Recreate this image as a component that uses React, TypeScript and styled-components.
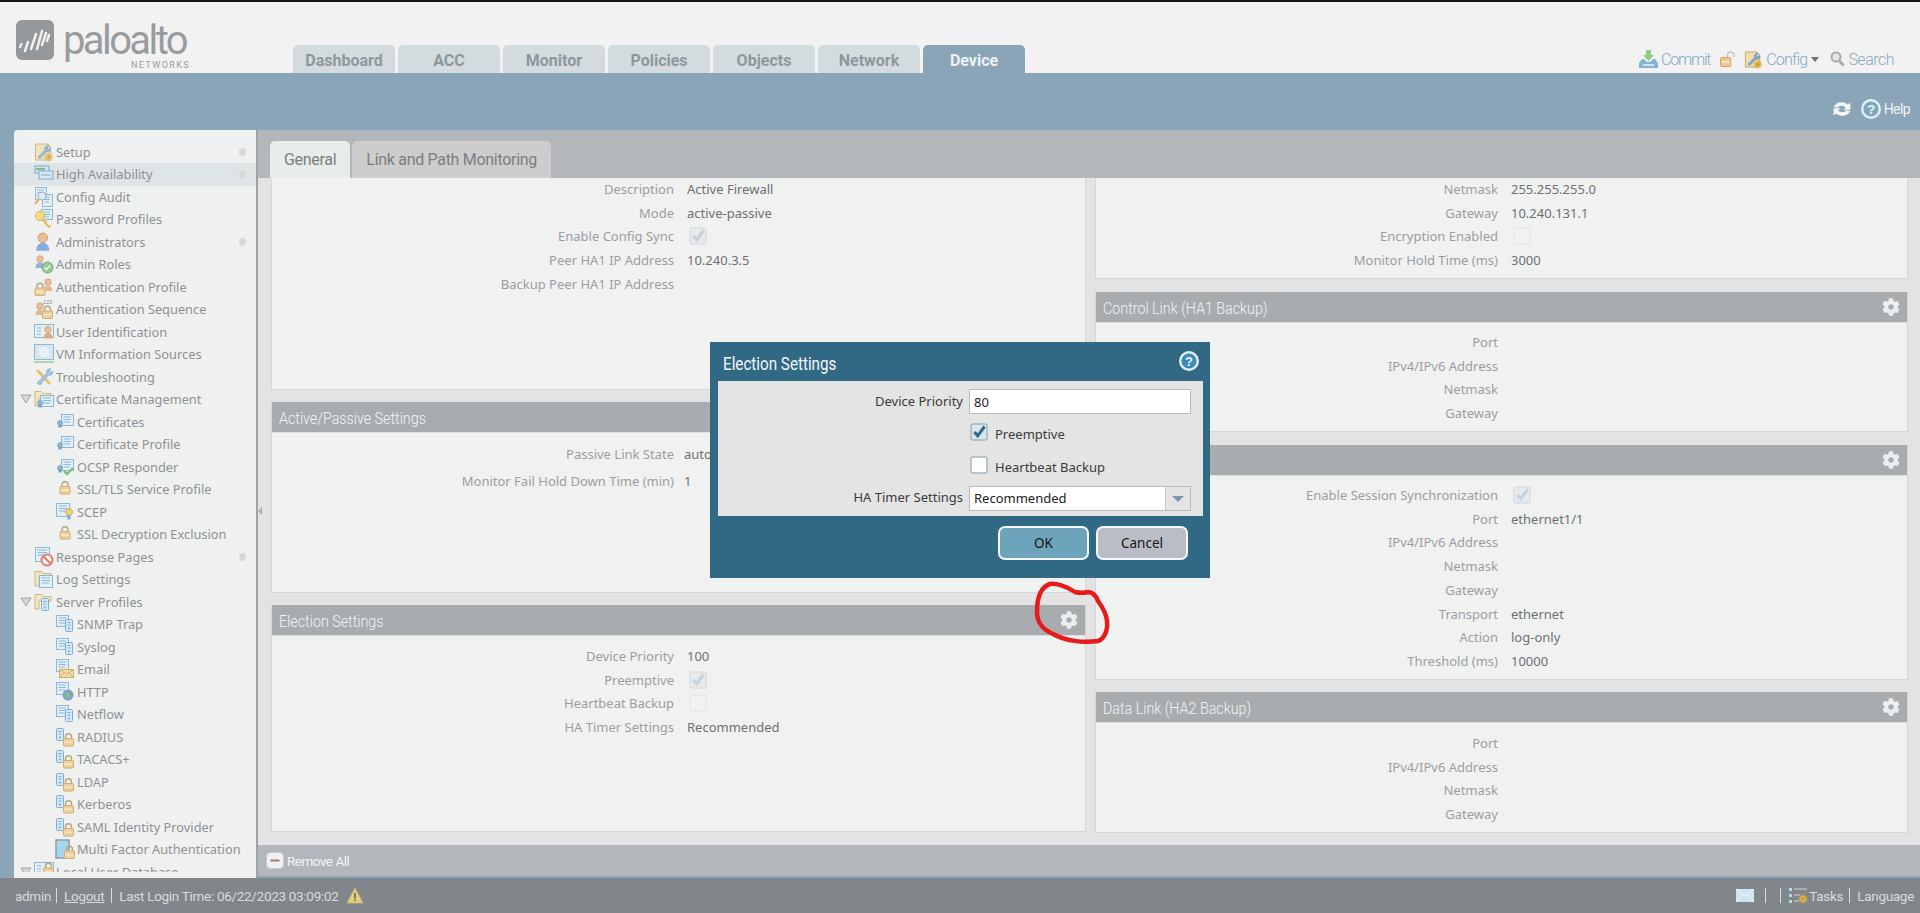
import React from 'react';
import styled, { createGlobalStyle } from 'styled-components';
import { FaCog } from 'react-icons/fa';

const BODY_FONT = '"Noto Sans", "Liberation Sans", sans-serif';
const THIN_FONT = 'Roboto, "Liberation Sans", sans-serif';

const GlobalStyle = createGlobalStyle`
  html, body { margin: 0; padding: 0; overflow: hidden; background: #f2f2f2; }
  * { box-sizing: border-box; }
`;

const Page = styled.div`
  width: 1920px;
  height: 913px;
  position: relative;
  display: flex;
  flex-direction: column;
  overflow: hidden;
  border-top: 2px solid #14171a;
  font-family: ${BODY_FONT};
`;

/* ---------- top header ---------- */
const Header = styled.header`
  height: 71px;
  flex: none;
  background: #f2f2f2;
  display: flex;
  align-items: flex-end;
  padding-left: 16px;
`;
const Logo = styled.div`
  width: 277px;
  height: 52px;
  align-self: flex-start;
  margin-top: 18px;
  display: flex;
  gap: 9px;
`;
const LogoWords = styled.div`
  width: 127px;
  display: flex;
  flex-direction: column;
  padding-top: 2px;
  color: #999c9f;
  font-family: Roboto, sans-serif;
`;
const LogoName = styled.span`
  height: 38px;
  font-size: 40px;
  line-height: 37px;
  letter-spacing: -2.6px;
`;
const LogoSub = styled.span`
  align-self: flex-end;
  font-size: 9px;
  line-height: 10px;
  letter-spacing: 1.4px;
`;
const NavTabs = styled.nav`
  display: flex;
  gap: 3px;
`;
const NavTab = styled.div<{ $active?: boolean }>`
  width: 102px;
  height: 28px;
  border-radius: 5px 5px 0 0;
  background: ${(p) => (p.$active ? '#8aa5b8' : '#d3dbde')};
  color: ${(p) => (p.$active ? '#eef2f4' : '#8e979c')};
  font-family: ${THIN_FONT};
  font-weight: 700;
  font-size: 16px;
  line-height: 32px;
  text-align: center;
`;
const HeaderActions = styled.div`
  margin-left: auto;
  height: 40px;
  align-self: flex-end;
  padding: 12px 26px 0 0;
  display: flex;
  align-items: center;
  color: #84aac6;
  font-family: ${THIN_FONT};
  font-weight: 300;
  font-size: 16px;
`;
const ActionItem = styled.span<{ $gap?: number; $spacing?: number }>`
  display: flex;
  align-items: center;
  gap: 3px;
  margin-left: ${(p) => p.$gap ?? 0}px;
  letter-spacing: ${(p) => p.$spacing ?? -0.5}px;
`;
const Caret = styled.i`
  width: 0;
  height: 0;
  margin-left: 1px;
  border-left: 4.5px solid transparent;
  border-right: 4.5px solid transparent;
  border-top: 5px solid #6d6f70;
`;

const Band = styled.div`
  height: 57px;
  flex: none;
  background: #8aa5b8;
  display: flex;
  align-items: flex-end;
  justify-content: flex-end;
  padding: 0 10px 11px 0;
  gap: 10px;
  color: #f0f3f5;
  font-family: ${THIN_FONT};
  font-size: 14px;
  letter-spacing: -0.6px;
`;
const HelpLink = styled.span`
  display: flex;
  align-items: center;
  gap: 3px;
`;

/* ---------- workspace ---------- */
const Workspace = styled.div`
  height: 748px;
  flex: none;
  background: #8aa5b8;
  padding-left: 14px;
  display: flex;
`;
const Sidebar = styled.aside`
  width: 242px;
  flex: none;
  background: #eff1f0;
  border-radius: 4px 0 0 0;
  padding-top: 10.5px;
`;
const TreeList = styled.div`
  height: 731.5px;
  overflow: hidden;
`;
const TreeRow = styled.div<{ $level: number; $arrow?: boolean; $active?: boolean }>`
  height: 22.5px;
  display: flex;
  align-items: center;
  gap: 2px;
  padding-left: ${(p) => (p.$level === 2 ? 41 : p.$arrow ? 6 : 20)}px;
  background: ${(p) => (p.$active ? '#dfe4e6' : 'transparent')};
  color: #8d9194;
  font-size: 12.8px;
  white-space: nowrap;
`;
const TreeArrow = styled.svg`
  width: 12px;
  height: 10px;
  flex: none;
`;
const TreeIcon = styled.svg`
  width: 20px;
  height: 20px;
  flex: none;
  opacity: 0.78;
`;
const TreeDot = styled.i`
  width: 7px;
  height: 8px;
  margin-left: auto;
  margin-right: 10px;
  border-radius: 50%;
  background: #d6d9da;
`;

const Main = styled.main`
  flex: 1;
  position: relative;
  background: #b3b6ba;
  border-left: 2px solid #9ea3a7;
  display: flex;
  flex-direction: column;
`;
const SubTabs = styled.div`
  height: 48px;
  flex: none;
  padding: 11px 0 0 12px;
  display: flex;
  gap: 2px;
`;
const SubTab = styled.div<{ $active?: boolean }>`
  padding: 0 14px;
  height: 37px;
  border-radius: 5px 5px 0 0;
  background: ${(p) => (p.$active ? '#e9ecec' : '#cdcdcd')};
  color: #7b7e80;
  font-family: ${THIN_FONT};
  font-size: 16px;
  letter-spacing: -0.3px;
  line-height: 38px;
`;
const Content = styled.div`
  height: 667px;
  flex: none;
  background: #e3e3e3;
  display: flex;
  overflow: hidden;
`;
const Column = styled.div<{ $left: number; $width: number }>`
  width: ${(p) => p.$width}px;
  margin-left: ${(p) => p.$left}px;
  flex: none;
  display: flex;
  flex-direction: column;
`;
const Panel = styled.section<{ $height: number; $after?: number }>`
  height: ${(p) => p.$height}px;
  margin-bottom: ${(p) => p.$after ?? 12}px;
  flex: none;
  background: #f0f2f1;
  border: 1px solid #d5d7d7;
  border-top: 0;
  overflow: hidden;
`;
const PanelHead = styled.div`
  height: 31px;
  margin: 0 -1px;
  padding: 1px 8px 0;
  background: #a8acaf;
  border-bottom: 1px solid #dcdddd;
  color: #f2f3f3;
  display: flex;
  align-items: center;
  justify-content: space-between;
  font-family: ${THIN_FONT};
  font-weight: 300;
  font-size: 17px;
  svg {
    width: 18px;
    height: 18px;
    margin: -1px 0 0;
    color: #eceeef;
  }
`;
const Squeezed = styled.span<{ $ratio: number }>`
  display: inline-block;
  white-space: nowrap;
  transform: scaleX(${(p) => p.$ratio});
  transform-origin: left center;
`;
const Fields = styled.div<{ $top: number }>`
  margin-top: ${(p) => p.$top}px;
`;
const FieldRow = styled.div<{ $pitch?: number; $gap?: number }>`
  height: ${(p) => p.$pitch ?? 23.75}px;
  display: grid;
  grid-template-columns: 402px 1fr;
  column-gap: ${(p) => p.$gap ?? 13}px;
  align-items: center;
  font-size: 13px;
  white-space: nowrap;
`;
const FieldLabel = styled.span`
  text-align: right;
  color: #9a9ea2;
`;
const FieldValue = styled.span`
  color: #6d7072;
  display: flex;
`;
const ReadOnlyBox = styled.svg`
  width: 18px;
  height: 18px;
  margin-left: 2px;
`;

const RemoveBar = styled.div`
  height: 33px;
  flex: none;
  background: #b3b6ba;
  border-bottom: 2px solid #8aa5b8;
  padding-left: 8px;
  display: flex;
  align-items: center;
  gap: 3px;
  color: #f3f4f5;
  font-family: ${THIN_FONT};
  font-size: 13.5px;
  letter-spacing: -0.5px;
`;

/* ---------- footer ---------- */
const Footer = styled.footer`
  flex: 1;
  background: #80868a;
  padding: 0 6px 0 15px;
  display: flex;
  align-items: center;
  color: #d9dcdd;
  font-family: ${THIN_FONT};
  font-size: 13.5px;
  letter-spacing: -0.3px;
`;
const FooterRule = styled.i<{ $left?: number; $right?: number }>`
  width: 1px;
  height: 15px;
  margin: 0 ${(p) => p.$right ?? 7}px 0 ${(p) => p.$left ?? 7}px;
  background: #d9dcdd;
`;
const LogoutLink = styled.span`
  text-decoration: underline;
`;
const FooterSpacer = styled.span`
  flex: 1;
`;

/* ---------- modal ---------- */
const Dialog = styled.div`
  position: absolute;
  left: 710px;
  top: 340px;
  width: 500px;
  height: 236px;
  background: #316985;
  padding: 0 7px 0 8px;
`;
const DialogTitle = styled.div`
  height: 39px;
  padding: 4px 0 0 5px;
  display: flex;
  align-items: center;
  justify-content: space-between;
  color: #f3f6f8;
  font-family: ${THIN_FONT};
  font-size: 19px;
  svg {
    margin: -5px 4px 0 0;
  }
`;
const DialogBody = styled.div`
  height: 135px;
  padding-top: 8px;
  background: #e4e4e4;
  display: grid;
  grid-template-columns: 245px 222px;
  grid-template-rows: 25px 30px 30px 25px;
  column-gap: 6px;
  row-gap: 3px;
  align-items: center;
  color: #3b3b3b;
  font-size: 13px;
`;
const DialogLabel = styled.label<{ $nudge: number }>`
  grid-column: 1;
  text-align: right;
  margin-top: ${(p) => p.$nudge}px;
`;
const TextInput = styled.div`
  grid-column: 2;
  height: 25px;
  background: #fff;
  border: 1px solid #b9bcbd;
  padding-left: 4px;
  line-height: 24px;
  color: #222;
`;
const CheckRow = styled.label`
  grid-column: 2;
  display: flex;
  align-items: center;
  gap: 7px;
  padding-left: 1px;
`;
const CheckText = styled.span`
  margin-top: 3px;
`;
const CheckBox = styled.svg`
  width: 18px;
  height: 18px;
`;
const SelectBox = styled.div`
  grid-column: 2;
  height: 25px;
  margin-top: 6px;
  background: #fff;
  border: 1px solid #b9bcbd;
  display: flex;
  align-items: center;
  padding: 0 0 0 4px;
  color: #222;
  line-height: 21px;
`;
const SelectArrow = styled.span`
  margin-left: auto;
  width: 25px;
  height: 23px;
  background: #e4e4e4;
  border-left: 1px solid #c9cbcc;
  display: flex;
  align-items: center;
  justify-content: center;
  &::after {
    content: '';
    border-left: 6px solid transparent;
    border-right: 6px solid transparent;
    border-top: 6px solid #7f99ab;
  }
`;
const DialogFooter = styled.div`
  display: flex;
  justify-content: flex-end;
  gap: 7px;
  padding: 10px 15px 0 0;
`;
const DialogButton = styled.button<{ $primary?: boolean }>`
  width: ${(p) => (p.$primary ? 91 : 92)}px;
  height: 34px;
  padding: 0;
  border: 2px solid #f5f7f8;
  border-radius: 7px;
  background: ${(p) => (p.$primary ? '#6ea3bc' : '#babdc6')};
  color: #151515;
  font-family: ${BODY_FONT};
  font-size: 13.5px;
`;
const Scribble = styled.svg`
  position: absolute;
  left: 1030px;
  top: 576px;
  width: 84px;
  height: 72px;
  pointer-events: none;
`;
const CollapseHandle = styled.i`
  position: absolute;
  left: 0;
  top: 377px;
  border-top: 4px solid transparent;
  border-bottom: 4px solid transparent;
  border-right: 4px solid #aab0b4;
`;

/* ---------- icon drawings ---------- */
const Gear = ({ x, y, r = 3 }: { x: number; y: number; r?: number }) => (
  <>
    <circle cx={x} cy={y} r={r + 0.7} fill="none" stroke="#d8a93b" strokeWidth="1.6" strokeDasharray="1.3 1" />
    <circle cx={x} cy={y} r={r} fill="#dfb445" />
    <circle cx={x} cy={y} r={r / 3} fill="#a87f1e" />
  </>
);
const FolderBack = () => <path d="M1 6V2.5h6.5L9 4.5h8V9H5v8H1z" fill="#f2e2b6" stroke="#c5a860" strokeWidth="1" />;
const Padlock = ({ x, y }: { x: number; y: number }) => (
  <g transform={`translate(${x} ${y})`}>
    <path d="M2.5 5V3.2a3 3 0 0 1 6 0V5" fill="none" stroke="#a89166" strokeWidth="1.4" />
    <rect x="0.5" y="5" width="10" height="7.5" rx="1" fill="#efc886" stroke="#c99a4e" />
    <rect x="1.5" y="8" width="8" height="1.5" fill="#f8e6c3" />
  </g>
);
const Sheet = ({ x, y, w = 11, h = 11 }: { x: number; y: number; w?: number; h?: number }) => (
  <g transform={`translate(${x} ${y})`}>
    <rect x="0.5" y="0.5" width={w} height={h} fill="#e3eff8" stroke="#6fa7d2" />
    <path d={`M2.5 3H${w - 2}M2.5 5.5H${w - 2}M2.5 8H${w - 3}`} stroke="#6fa7d2" />
  </g>
);
const Tower = ({ x, y }: { x: number; y: number }) => (
  <g transform={`translate(${x} ${y})`}>
    <rect x="0.5" y="0.5" width="7" height="12" rx="1" fill="#cfe3f3" stroke="#5d9ccd" />
    <path d="M2.5 3.5h3M2.5 6h3" stroke="#5d9ccd" />
    <circle cx="4" cy="9.5" r="0.9" fill="#4b86b8" />
  </g>
);
const Person = ({ x, y, body = '#6d94d6' }: { x: number; y: number; body?: string }) => (
  <g transform={`translate(${x} ${y})`}>
    <circle cx="5" cy="4" r="3.3" fill="#e9b27f" stroke="#b97f45" strokeWidth=".6" />
    <path d="M.5 13c0-4 2-5.500 4.500-5.500S9.500 9 9.500 13z" fill={body} />
  </g>
);
const Rosette = ({ x, y }: { x: number; y: number }) => (
  <g transform={`translate(${x} ${y})`}>
    <path d="M1.500 4v4l1.500-1 1.500 1V4z" fill="#4b86b8" />
    <circle cx="3" cy="3" r="2.500" fill="#6fa7d2" stroke="#3f7ba8" strokeWidth=".6" />
  </g>
);
const ServerPair = () => (
  <>
    <Sheet x={1} y={1} w={12} h={11} />
    <Tower x={10} y={5} />
  </>
);
const ServerLock = () => (
  <>
    <Tower x={1} y={1} />
    <Padlock x={8} y={6.5} />
  </>
);
const Certificate = () => (
  <>
    <Sheet x={6} y={2} w={12} h={11} />
    <Rosette x={2} y={8} />
  </>
);

const ICONS: Record<string, React.ReactNode> = {
  setup: (
    <>
      <path d="M1.500 2h12l3 3v13h-15z" fill="#f0dfae" stroke="#c5a860" />
      <path d="M4 15l7-7a3 3 0 0 1 4-4l-2 2 1.500 1.500 2-2a3 3 0 0 1-4 4l-6.500 7z" fill="#7fb0db" stroke="#4d87b8" strokeWidth=".6" />
      <Gear x={14.500} y={15} />
    </>
  ),
  ha: (
    <>
      <rect x="1" y="2" width="14" height="7" fill="#cfe3f3" stroke="#5d9ccd" />
      <rect x="5" y="7" width="14" height="8" fill="#dcebf7" stroke="#5d9ccd" />
      <path d="M2 5h9" stroke="#6fb36a" strokeWidth="2" />
      <path d="M7 11h10" stroke="#5d9ccd" />
    </>
  ),
  audit: (
    <>
      <Sheet x={1} y={0} w={11} h={12} />
      <Sheet x={8} y={7} w={10} h={12} />
      <circle cx="8" cy="9" r="4" fill="#d9ecf7" stroke="#8aa0ad" />
      <path d="M5 12l-4 5" stroke="#dca552" strokeWidth="2.400" />
    </>
  ),
  key: (
    <>
      <Sheet x={7} y={0} w={11} h={10} />
      <circle cx="6" cy="7" r="4.500" fill="#f5d764" stroke="#c9a432" />
      <path d="M8 10l7 8 1.500-1.500M11 13l2-1" stroke="#d9b23e" strokeWidth="2" fill="none" />
    </>
  ),
  admin: (
    <g transform="translate(1.500 0) scale(1.45)">
      <Person x={0} y={0} />
    </g>
  ),
  roles: (
    <>
      <Person x={1} y={1} body="#7fa0d8" />
      <circle cx="13.500" cy="13.500" r="5.500" fill="#7cc07a" stroke="#4c9a55" />
      <path d="M10.500 13.500l2 2 3.500-4" stroke="#fff" strokeWidth="1.500" fill="none" />
    </>
  ),
  authProfile: (
    <>
      <Padlock x={0.500} y={6} />
      <Person x={9} y={1} body="#e0ad70" />
    </>
  ),
  authSeq: (
    <>
      <Person x={1} y={3} body="#e0ad70" />
      <Padlock x={8} y={7} />
      <text x="9" y="4.500" fontSize="5.500" fontFamily="Liberation Sans" fill="#6c6f71">123</text>
    </>
  ),
  userId: (
    <>
      <rect x="0.500" y="2.500" width="19" height="13" fill="#e3eff8" stroke="#6fa7d2" />
      <path d="M3 6h4M3 9h4M3 12h4" stroke="#6fa7d2" />
      <Person x={9} y={3.500} body="#d79b5e" />
    </>
  ),
  vm: (
    <>
      <rect x="0.500" y="0.500" width="19" height="15" fill="#cfe3f3" stroke="#7fa9c9" />
      <rect x="6" y="4" width="6" height="6" fill="none" stroke="#fff" />
      <rect x="8" y="6" width="6" height="6" fill="none" stroke="#fff" />
      <path d="M0 18h20" stroke="#9dcf9a" strokeWidth="2" />
    </>
  ),
  trouble: (
    <>
      <path d="M3 3l13 14" stroke="#e7b64b" strokeWidth="3" />
      <path d="M3 16L13 6a3 3 0 0 1 4-4l-2 2 1.500 1.500 2-1.500a3 3 0 0 1-4 4L6 18z" fill="#8dbbe0" stroke="#4d87b8" strokeWidth=".6" />
    </>
  ),
  certFolder: (
    <>
      <FolderBack />
      <Sheet x={6} y={6} w={13} h={11} />
      <Rosette x={3} y={11} />
    </>
  ),
  cert: <Certificate />,
  ocsp: (
    <>
      <Certificate />
      <path d="M9 14l3 3 6-6" stroke="#62b04d" strokeWidth="2.400" fill="none" />
    </>
  ),
  lock: <Padlock x={4.500} y={2.500} />,
  scep: (
    <>
      <Sheet x={1} y={1} w={13} h={13} />
      <circle cx="14" cy="10" r="3.500" fill="#efc95a" stroke="#c9a432" />
      <path d="M12.500 13v5l1.500-1 1.500 1v-5" fill="#5d9ccd" />
    </>
  ),
  response: (
    <>
      <Sheet x={1} y={0} w={14} h={14} />
      <circle cx="13" cy="13" r="5.500" fill="#fff" stroke="#dd5a50" strokeWidth="2" />
      <path d="M9.500 9.500l7 7" stroke="#dd5a50" strokeWidth="2" />
    </>
  ),
  logFolder: (
    <>
      <FolderBack />
      <Sheet x={5} y={6} w={13} h={12} />
    </>
  ),
  serverFolder: (
    <>
      <FolderBack />
      <Tower x={7} y={6} />
    </>
  ),
  server: <ServerPair />,
  email: (
    <>
      <Sheet x={1} y={0} w={12} h={12} />
      <rect x="4.500" y="10.500" width="14" height="8" fill="#f3d894" stroke="#c9a045" />
      <path d="M4.500 10.500l7 4.500 7-4.500M4.500 18.500l5-5M18.500 18.500l-5-5" stroke="#c9a045" fill="none" />
    </>
  ),
  http: (
    <>
      <Sheet x={1} y={0} w={12} h={12} />
      <circle cx="13" cy="13" r="5.500" fill="#5f86c8" />
      <path d="M11 10l3 1 1 3-3 2-1-3zM15 16l2-1" fill="#6db35c" stroke="#6db35c" />
    </>
  ),
  serverLock: <ServerLock />,
  mfa: (
    <>
      <rect x="1" y="1" width="13" height="18" fill="#8fd0ee" stroke="#7d8488" strokeWidth="1.500" />
      <Padlock x={9} y={7} />
    </>
  ),
  userDb: (
    <>
      <rect x="0.500" y="0.500" width="19" height="14" fill="#e3eff8" stroke="#6fa7d2" />
      <path d="M3 4h4M3 7h4M3 10h4" stroke="#6fa7d2" />
      <Padlock x={9} y={1} />
    </>
  ),
};

const CheckMark = ({ color }: { color: string }) => (
  <path d="M4.500 9l3.200 3.800L14.500 3.500" fill="none" stroke={color} strokeWidth="3" />
);

const BoxIcon = ({ checked }: { checked?: boolean }) => (
  <ReadOnlyBox viewBox="0 0 18 18">
    <rect x="1" y="1" width="16" height="16" rx="2" fill={checked ? '#e6eaec' : '#f0f2f1'} stroke={checked ? '#dadedf' : '#e6e8e8'} strokeWidth="1.500" />
    {checked && <CheckMark color="#c3d3de" />}
  </ReadOnlyBox>
);

const HelpIcon = ({ size, fill }: { size: number; fill: string }) => (
  <svg width={size} height={size} viewBox="0 0 20 20">
    <circle cx="10" cy="10" r="8.800" fill={fill} stroke="#e4eff5" strokeWidth="2.400" />
    <text x="10" y="14.500" textAnchor="middle" fontSize="13" fontWeight="700" fontFamily="Liberation Sans" fill="#eef5f9">?</text>
  </svg>
);

const TREE = [
  { label: 'Setup', icon: 'setup', level: 1, dot: true },
  { label: 'High Availability', icon: 'ha', level: 1, dot: true, active: true },
  { label: 'Config Audit', icon: 'audit', level: 1 },
  { label: 'Password Profiles', icon: 'key', level: 1 },
  { label: 'Administrators', icon: 'admin', level: 1, dot: true },
  { label: 'Admin Roles', icon: 'roles', level: 1 },
  { label: 'Authentication Profile', icon: 'authProfile', level: 1 },
  { label: 'Authentication Sequence', icon: 'authSeq', level: 1 },
  { label: 'User Identification', icon: 'userId', level: 1 },
  { label: 'VM Information Sources', icon: 'vm', level: 1 },
  { label: 'Troubleshooting', icon: 'trouble', level: 1 },
  { label: 'Certificate Management', icon: 'certFolder', level: 1, arrow: true },
  { label: 'Certificates', icon: 'cert', level: 2 },
  { label: 'Certificate Profile', icon: 'cert', level: 2 },
  { label: 'OCSP Responder', icon: 'ocsp', level: 2 },
  { label: 'SSL/TLS Service Profile', icon: 'lock', level: 2 },
  { label: 'SCEP', icon: 'scep', level: 2 },
  { label: 'SSL Decryption Exclusion', icon: 'lock', level: 2 },
  { label: 'Response Pages', icon: 'response', level: 1, dot: true },
  { label: 'Log Settings', icon: 'logFolder', level: 1 },
  { label: 'Server Profiles', icon: 'serverFolder', level: 1, arrow: true },
  { label: 'SNMP Trap', icon: 'server', level: 2 },
  { label: 'Syslog', icon: 'server', level: 2 },
  { label: 'Email', icon: 'email', level: 2 },
  { label: 'HTTP', icon: 'http', level: 2 },
  { label: 'Netflow', icon: 'server', level: 2 },
  { label: 'RADIUS', icon: 'serverLock', level: 2 },
  { label: 'TACACS+', icon: 'serverLock', level: 2 },
  { label: 'LDAP', icon: 'serverLock', level: 2 },
  { label: 'Kerberos', icon: 'serverLock', level: 2 },
  { label: 'SAML Identity Provider', icon: 'serverLock', level: 2 },
  { label: 'Multi Factor Authentication', icon: 'mfa', level: 2 },
  { label: 'Local User Database', icon: 'userDb', level: 1, arrow: true },
];

type Field = [string, string?, boolean?];

const Rows = ({ rows, top, pitch, gap }: { rows: Field[]; top: number; pitch?: number; gap?: number }) => (
  <Fields $top={top}>
    {rows.map(([label, value, checked]) => (
      <FieldRow key={label} $pitch={pitch} $gap={gap}>
        <FieldLabel>{label}</FieldLabel>
        <FieldValue>{checked === undefined ? value : <BoxIcon checked={checked} />}</FieldValue>
      </FieldRow>
    ))}
  </Fields>
);

const PanelTitle = ({ title, gear = true }: { title: string; gear?: boolean }) => (
  <PanelHead>
    <Squeezed $ratio={0.84}>{title}</Squeezed>
    {gear && <FaCog />}
  </PanelHead>
);

export default function App() {
  return (
    <Page>
      <GlobalStyle />
      <Header>
        <Logo>
          <svg width="38" height="40" viewBox="0 0 38 40">
            <rect width="38" height="40" rx="6" fill="#95989b" />
            <path d="M4 27l1.500-3M9 31l3-9M15 29l5-15M21 29l5-18M26 25l4-12M31 21l2-6" stroke="#f2f2f2" strokeWidth="2.400" strokeLinecap="round" />
          </svg>
          <LogoWords>
            <LogoName>paloalto</LogoName>
            <LogoSub>NETWORKS</LogoSub>
          </LogoWords>
        </Logo>
        <NavTabs>
          {['Dashboard', 'ACC', 'Monitor', 'Policies', 'Objects', 'Network'].map((t) => (
            <NavTab key={t}>{t}</NavTab>
          ))}
          <NavTab $active>Device</NavTab>
        </NavTabs>
        <HeaderActions>
          <ActionItem $spacing={-1.2}>
            <svg width="19" height="18" viewBox="0 0 19 18">
              <path d="M7 0h5v5h3l-5.500 6L4 5h3z" fill="#8ecf7c" />
              <path d="M3 9h2l3 3h3l3-3h2l3 4v5H0v-5z" fill="#85b3d4" />
              <path d="M4 15h11" stroke="#eef5f9" strokeWidth="1.500" />
            </svg>
            Commit
          </ActionItem>
          <ActionItem $gap={10}>
            <svg width="15" height="17" viewBox="0 0 16 17">
              <path d="M8 6V4a3.500 3.500 0 0 1 7 0v2" fill="none" stroke="#c5c5c5" strokeWidth="1.500" />
              <rect x="0.500" y="6.500" width="11" height="9.500" rx="1" fill="#eec78c" stroke="#cf9f57" />
              <rect x="1.500" y="10" width="9" height="2" fill="#f8e5c4" />
            </svg>
          </ActionItem>
          <ActionItem $gap={9} $spacing={-0.8}>
            <svg width="19" height="19" viewBox="0 0 20 20">
              {ICONS.setup}
            </svg>
            Config
            <Caret />
          </ActionItem>
          <ActionItem $gap={11}>
            <svg width="15" height="16" viewBox="0 0 15 16">
              <circle cx="6" cy="6" r="4.500" fill="#e4e6e7" stroke="#a9abac" strokeWidth="2" />
              <path d="M9.500 10l4 4.500" stroke="#a9abac" strokeWidth="3" />
            </svg>
            Search
          </ActionItem>
        </HeaderActions>
      </Header>
      <Band>
        <svg width="18" height="16" viewBox="1.500 1.500 14 12" style={{ marginBottom: 2 }}>
          <path d="M2 6a6.500 5.500 0 0 1 11-2l2-1.500V8H9.500l2-1.500A4 3.500 0 0 0 5 6.500zM15 9a6.500 5.500 0 0 1-11 2l-2 1.500V7h5.500l-2 1.500A4 3.500 0 0 0 12 8.500z" fill="#f3f5f6" />
        </svg>
        <HelpLink>
          <HelpIcon size={20} fill="#7ea6be" />
          Help
        </HelpLink>
      </Band>
      <Workspace>
        <Sidebar>
          <TreeList>
            {TREE.map((item) => (
              <TreeRow key={item.label} $level={item.level} $arrow={item.arrow} $active={item.active}>
                {item.arrow && (
                  <TreeArrow viewBox="0 0 12 10">
                    <path d="M1 1h10L6 9z" fill="#d5d8d9" stroke="#a0a4a6" />
                  </TreeArrow>
                )}
                <TreeIcon viewBox="0 0 20 20">{ICONS[item.icon]}</TreeIcon>
                {item.label}
                {item.dot && <TreeDot />}
              </TreeRow>
            ))}
          </TreeList>
        </Sidebar>
        <Main>
          <CollapseHandle />
          <SubTabs>
            <SubTab $active>General</SubTab>
            <SubTab>Link and Path Monitoring</SubTab>
          </SubTabs>
          <Content>
            <Column $left={13} $width={815}>
              <Panel $height={212}>
                <Rows
                  top={-1}
                  rows={[
                    ['Description', 'Active Firewall'],
                    ['Mode', 'active-passive'],
                    ['Enable Config Sync', undefined, true],
                    ['Peer HA1 IP Address', '10.240.3.5'],
                    ['Backup Peer HA1 IP Address', ''],
                  ]}
                />
              </Panel>
              <Panel $height={191}>
                <PanelTitle title="Active/Passive Settings" gear={false} />
                <Rows
                  top={7.5}
                  pitch={27}
                  gap={10}
                  rows={[
                    ['Passive Link State', 'auto'],
                    ['Monitor Fail Hold Down Time (min)', '1'],
                  ]}
                />
              </Panel>
              <Panel $height={227} $after={0}>
                <PanelTitle title="Election Settings" />
                <Rows
                  top={8}
                  rows={[
                    ['Device Priority', '100'],
                    ['Preemptive', undefined, true],
                    ['Heartbeat Backup', undefined, false],
                    ['HA Timer Settings', 'Recommended'],
                  ]}
                />
              </Panel>
            </Column>
            <Column $left={9} $width={813}>
              <Panel $height={101} $after={13}>
                <Rows
                  top={-1}
                  rows={[
                    ['Netmask', '255.255.255.0'],
                    ['Gateway', '10.240.131.1'],
                    ['Encryption Enabled', undefined, false],
                    ['Monitor Hold Time (ms)', '3000'],
                  ]}
                />
              </Panel>
              <Panel $height={140} $after={13}>
                <PanelTitle title="Control Link (HA1 Backup)" />
                <Rows
                  top={7}
                  rows={[['Port', ''], ['IPv4/IPv6 Address', ''], ['Netmask', ''], ['Gateway', '']]}
                />
              </Panel>
              <Panel $height={235}>
                <PanelTitle title="Data Link (HA2)" />
                <Rows
                  top={7}
                  rows={[
                    ['Enable Session Synchronization', undefined, true],
                    ['Port', 'ethernet1/1'],
                    ['IPv4/IPv6 Address', ''],
                    ['Netmask', ''],
                    ['Gateway', ''],
                    ['Transport', 'ethernet'],
                    ['Action', 'log-only'],
                    ['Threshold (ms)', '10000'],
                  ]}
                />
              </Panel>
              <Panel $height={141} $after={0}>
                <PanelTitle title="Data Link (HA2 Backup)" />
                <Rows
                  top={8}
                  rows={[['Port', ''], ['IPv4/IPv6 Address', ''], ['Netmask', ''], ['Gateway', '']]}
                />
              </Panel>
            </Column>
          </Content>
          <RemoveBar>
            <svg width="18" height="17" viewBox="0 0 18 17">
              <rect x="0.500" y="0.500" width="17" height="16" rx="4" fill="#eef0f1" stroke="#c9ccce" />
              <path d="M4.500 8.500h9" stroke="#a9786d" strokeWidth="2" />
            </svg>
            Remove All
          </RemoveBar>
        </Main>
      </Workspace>
      <Footer>
        admin
        <FooterRule $left={5} />
        <LogoutLink>Logout</LogoutLink>
        <FooterRule />
        Last Login Time: 06/22/2023 03:09:02
        <svg width="18" height="17" viewBox="0 0 18 17" style={{ marginLeft: 8 }}>
          <path d="M9 1l8 15H1z" fill="#e2cf86" stroke="#cbb56a" />
          <path d="M9 6v5.500M9 12.500v1.500" stroke="#6e6a4e" strokeWidth="1.600" />
        </svg>
        <FooterSpacer />
        <svg width="18" height="13" viewBox="0 0 18 13">
          <rect width="18" height="13" fill="#cfe3f1" />
          <path d="M0 0l9 7 9-7M0 13l6-7M18 13l-6-7" fill="none" stroke="#f1f7fb" />
        </svg>
        <FooterRule $left={11} $right={14} />
        <FooterRule $left={0} $right={8} />
        <svg width="19" height="18" viewBox="0 0 19 18" style={{ marginRight: 1 }}>
          <path d="M0 1h3v3H0zM0 7h3v3H0zM0 13h3v3H0z" fill="#b9d5e8" />
          <path d="M5 2h13M5 8h6M5 14h5" stroke="#d4d7d8" />
          <Gear x={14} y={12} />
        </svg>
        Tasks
        <FooterRule $left={6} />
        Language
      </Footer>

      <Dialog>
        <DialogTitle>
          <Squeezed $ratio={0.8}>Election Settings</Squeezed>
          <HelpIcon size={20} fill="#3c8ab6" />
        </DialogTitle>
        <DialogBody>
          <DialogLabel $nudge={-2}>Device Priority</DialogLabel>
          <TextInput>80</TextInput>
          <CheckRow>
            <CheckBox viewBox="0 0 18 18">
              <rect x="1" y="1" width="16" height="16" rx="2" fill="#dbe4e9" stroke="#a5b6c1" strokeWidth="1.500" />
              <CheckMark color="#2f6a8b" />
            </CheckBox>
            <CheckText>Preemptive</CheckText>
          </CheckRow>
          <CheckRow>
            <CheckBox viewBox="0 0 18 18">
              <rect x="1" y="1" width="16" height="16" rx="2" fill="#fff" stroke="#a5b6c1" strokeWidth="1.500" />
            </CheckBox>
            <CheckText>Heartbeat Backup</CheckText>
          </CheckRow>
          <DialogLabel $nudge={2}>HA Timer Settings</DialogLabel>
          <SelectBox>
            Recommended
            <SelectArrow />
          </SelectBox>
        </DialogBody>
        <DialogFooter>
          <DialogButton $primary>OK</DialogButton>
          <DialogButton>Cancel</DialogButton>
        </DialogFooter>
      </Dialog>
      <Scribble viewBox="0 0 84 72">
        <path
          d="M45 14C36 8 26 5 20 6 11 9 7 20 7 34c0 10 6 18 16 22 12 7 30 9 45 7 6-2 10-10 9-20-1-9-6-16-9-20-2-5-5-9-10-9-4 1-9 1-13 0"
          fill="none"
          stroke="#e61a1a"
          strokeWidth="4.500"
          strokeLinecap="round"
        />
      </Scribble>
    </Page>
  );
}
